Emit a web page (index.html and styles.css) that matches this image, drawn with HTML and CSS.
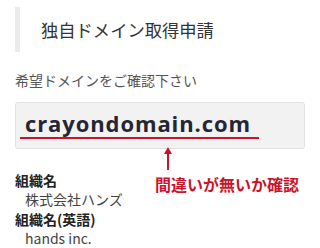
FILE: index.html
```html
<!DOCTYPE html>
<html lang="ja">
<head>
    <meta charset="UTF-8">
    <meta name="viewport" content="width=device-width, initial-scale=1.0">
    <title>独自ドメイン取得申請</title>
    <link rel="stylesheet" href="styles.css">
</head>
<body>
    <div class="page">
        <h2 class="title">独自ドメイン取得申請</h2>

        <p class="label">希望ドメインをご確認下さい</p>

        <div class="domain-box">
            <span class="domain">crayondomain.com</span>
        </div>

        <div class="note">
            <svg class="note-arrow" width="10" height="23" viewBox="0 0 10 23">
                <polygon points="1,7 5,0 9,7" fill="#c8142c"/>
                <rect x="4" y="6" width="2" height="17" fill="#c8142c"/>
            </svg>
            <p class="note-text">間違いが無いか確認</p>
        </div>

        <dl class="info">
            <dt>組織名</dt>
            <dd>株式会社ハンズ</dd>
            <dt>組織名(英語)</dt>
            <dd>hands inc.</dd>
        </dl>
    </div>
</body>
</html>
```

FILE: styles.css
```css
:root {
    --text-color: #333;
    --sub-color: #555;
    --accent-color: #c8142c;
    --box-bg: #f2f2f2;
    --box-border: #e2e2e2;
}

* {
    margin: 0;
    padding: 0;
    box-sizing: border-box;
}

body {
    font-family: "Noto Sans CJK JP", "Noto Sans", sans-serif;
    color: var(--text-color);
    background: #fff;
}

.page {
    position: relative;
    padding: 7px 15px 0 15px;
}

.title {
    display: flex;
    align-items: center;
    height: 45px;
    padding-left: 21px;
    border-left: 5px solid #ebebeb;
    font-size: 17.3px;
    font-weight: 400;
    color: #333;
}

.label {
    margin-top: 18px;
    font-size: 14px;
    line-height: 20px;
    color: var(--sub-color);
}

.domain-box {
    margin-top: 12px;
    height: 47px;
    padding: 6px 0 0 4px;
    background: var(--box-bg);
    border: 1px solid var(--box-border);
    border-radius: 3px;
}

.domain {
    display: inline-block;
    padding: 0 8px 0 5px;
    font-family: "Open Sans", "Liberation Sans", sans-serif;
    font-size: 22px;
    font-weight: 700;
    line-height: 28px;
    letter-spacing: 0.9px;
    color: #262633;
    border-bottom: 2px solid var(--accent-color);
}

.note {
    position: absolute;
    left: 155px;
    top: 147px;
}

.note-arrow {
    display: block;
    margin-left: 8px;
}

.note-text {
    margin-top: 4px;
    font-size: 16px;
    font-weight: 700;
    line-height: 20px;
    color: var(--accent-color);
}

.info {
    margin-top: 21px;
    font-size: 14px;
    line-height: 20px;
}

.info dt {
    font-weight: 700;
    color: #222;
}

.info dd {
    margin-left: 10px;
    line-height: 19px;
    color: #444;
}
```
